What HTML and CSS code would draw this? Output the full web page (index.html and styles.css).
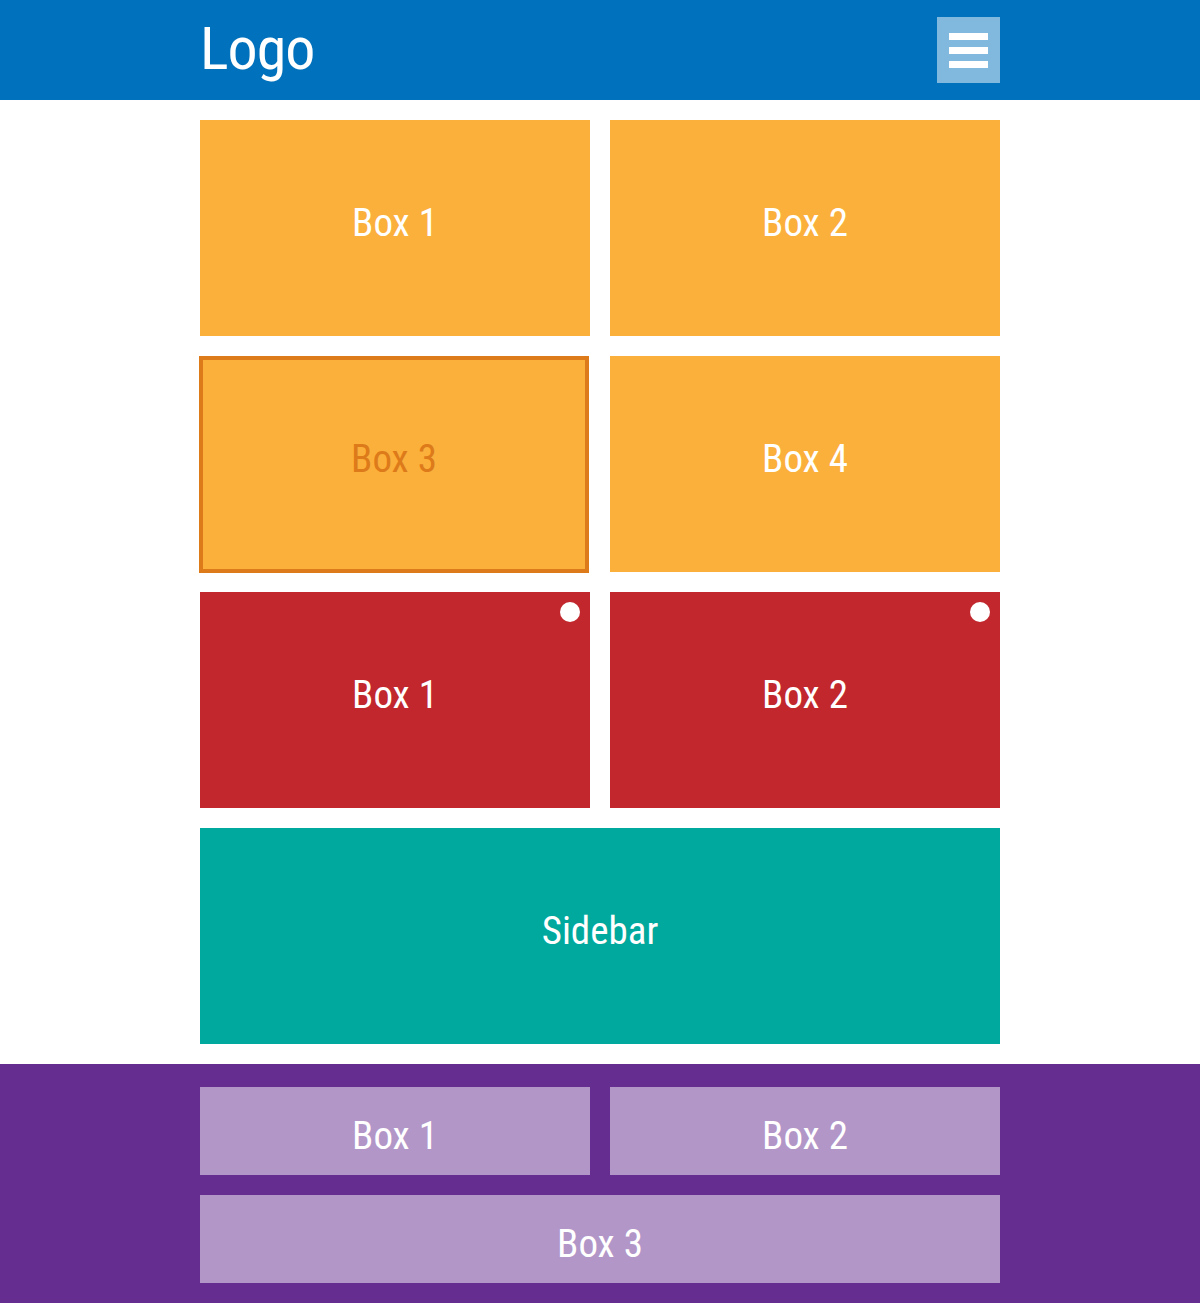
FILE: index.html
```html
<!DOCTYPE html>
<html lang="en">
<head>
<meta charset="utf-8">
<title>Layout</title>
<link rel="stylesheet" href="styles.css">
</head>
<body>
<header class="header">
  <div class="wrap header-inner">
    <div class="logo">Logo</div>
    <button class="menu" aria-label="Menu">
      <span class="bar"></span><span class="bar"></span><span class="bar"></span>
    </button>
  </div>
</header>
<main class="wrap main">
  <div class="grid">
    <div class="box orange"><span class="label">Box 1</span></div>
    <div class="box orange"><span class="label">Box 2</span></div>
    <div class="box orange outlined"><span class="label">Box 3</span></div>
    <div class="box orange"><span class="label">Box 4</span></div>
    <div class="box red"><span class="label">Box 1</span><span class="dot"></span></div>
    <div class="box red"><span class="label">Box 2</span><span class="dot"></span></div>
    <div class="box teal wide"><span class="label">Sidebar</span></div>
  </div>
</main>
<footer class="footer">
  <div class="wrap grid footer-grid">
    <div class="fbox"><span class="label">Box 1</span></div>
    <div class="fbox"><span class="label">Box 2</span></div>
    <div class="fbox wide"><span class="label">Box 3</span></div>
  </div>
</footer>
</body>
</html>
```
FILE: styles.css
```css
* { box-sizing: border-box; }
html, body { margin: 0; padding: 0; }
body {
  background: #ffffff;
  font-family: Roboto, "Liberation Sans", sans-serif;
  font-stretch: condensed;
  color: #ffffff;
}
.wrap {
  width: 800px;
  margin: 0 auto;
}
.header {
  background: #0071bc;
  height: 100px;
}
.header-inner {
  height: 100px;
  display: flex;
  align-items: center;
  justify-content: space-between;
}
.logo {
  font-size: 60px;
  line-height: 1;
  letter-spacing: -1px;
  padding-bottom: 2px;
}
.menu {
  width: 63px;
  height: 66px;
  border: 0;
  padding: 0;
  background: #80b8de;
  display: flex;
  flex-direction: column;
  align-items: center;
  justify-content: center;
  gap: 7px;
  cursor: pointer;
}
.bar {
  display: block;
  width: 39px;
  height: 7px;
  background: #ffffff;
}
.main {
  padding: 20px 0;
}
.grid {
  display: grid;
  grid-template-columns: 1fr 1fr;
  gap: 20px;
}
.wide { grid-column: 1 / -1; }
.box {
  position: relative;
  height: 216px;
  display: flex;
  align-items: center;
  justify-content: center;
  padding-bottom: 9px;
}
.label {
  font-size: 39px;
  line-height: 1;
}
.orange { background: #fbb03b; }
.red { background: #c1272d; }
.teal { background: #00a99d; }
.outlined {
  border: 4px solid #dd7a1a;
  color: #dd7a1a;
  height: 217px;
  margin: 0 1px -1px -1px;
  padding-bottom: 11px;
}
.dot {
  position: absolute;
  top: 10px;
  right: 10px;
  width: 20px;
  height: 20px;
  border-radius: 50%;
  background: #ffffff;
}
.footer {
  background: #662d91;
  padding: 23px 0 20px;
}
.fbox {
  background: #b296c8;
  height: 88px;
  display: flex;
  align-items: center;
  justify-content: center;
  padding-top: 11px;
}
```
